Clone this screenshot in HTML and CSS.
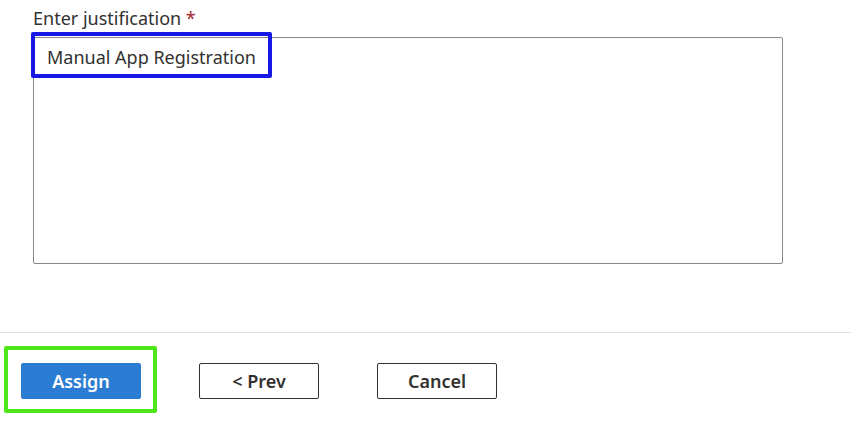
FILE: index.html
```html
<!DOCTYPE html>
<html>
<head>
<meta charset="utf-8">
<link rel="stylesheet" href="styles.css">
</head>
<body>
<div class="page">
  <section class="form">
    <label class="label" for="just">Enter justification <span class="req">*</span></label>
    <div class="field">
      <div class="textarea" id="just">Manual App Registration</div>
      <div class="mark mark-blue"></div>
    </div>
  </section>
  <footer class="footer">
    <div class="btn-wrap">
      <button class="btn btn-primary">Assign</button>
      <div class="mark mark-green"></div>
    </div>
    <button class="btn">&lt; Prev</button>
    <button class="btn">Cancel</button>
  </footer>
</div>
</body>
</html>
```
FILE: styles.css
```css
* { box-sizing: border-box; }
html, body { margin: 0; padding: 0; background: #fff; }
body {
  font-family: "Noto Sans", "Open Sans", sans-serif;
  color: #323130;
  width: 851px;
  height: 421px;
  overflow: hidden;
}
.page { display: flex; flex-direction: column; }
.form { padding: 6px 0 0 33px; height: 332px; }
.label {
  display: block;
  font-size: 18px;
  line-height: 25px;
  color: #323130;
  margin-bottom: 6px;
}
.req { color: #a4262c; }
.field { position: relative; width: 750px; }
.textarea {
  width: 750px;
  height: 227px;
  border: 1px solid #8a8886;
  border-radius: 2px;
  padding: 6px 13px;
  font-size: 18px;
  line-height: 26px;
  color: #323130;
}
.mark { position: absolute; pointer-events: none; }
.mark-blue {
  left: -2px;
  top: -5px;
  width: 241px;
  height: 46px;
  border: 4px solid #1818e6;
  border-radius: 2px;
}
.footer {
  border-top: 1px solid #e1dfdd;
  display: flex;
  align-items: center;
  gap: 58px;
  padding: 30px 0 0 21px;
}
.btn-wrap { position: relative; }
.btn {
  width: 120px;
  height: 36px;
  border: 1px solid #323130;
  border-radius: 2px;
  background: #fff;
  font-family: "Noto Sans", "Open Sans", sans-serif;
  font-size: 18px;
  font-weight: 600;
  color: #323130;
  padding: 0;
}
.btn-primary {
  display: block;
  background: #2b7cd3;
  border-color: #2b7cd3;
  color: #fff;
}
.mark-green {
  left: -17px;
  top: -17px;
  width: 153px;
  height: 67px;
  border: 4px solid #4ee619;
  border-radius: 2px;
}
```
